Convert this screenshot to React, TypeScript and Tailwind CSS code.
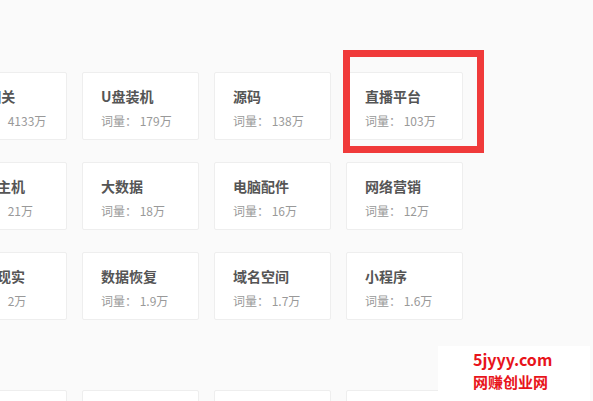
import React from "react";

const rows = [
  [
    ["5G相关", "4133万"],
    ["U盘装机", "179万"],
    ["源码", "138万"],
    ["直播平台", "103万"],
  ],
  [
    ["虚拟主机", "21万"],
    ["大数据", "18万"],
    ["电脑配件", "16万"],
    ["网络营销", "12万"],
  ],
  [
    ["虚拟现实", "2万"],
    ["数据恢复", "1.9万"],
    ["域名空间", "1.7万"],
    ["小程序", "1.6万"],
  ],
];

function Card({ title, count }: { title: string; count: string }) {
  return (
    <div className="h-[68px] bg-white border border-[#eeeeee] rounded-[2px] pl-[18px] pt-[14px] overflow-hidden">
      <div className="text-[14px] leading-[18px] font-bold text-[#555555] whitespace-nowrap">{title}</div>
      <div className="mt-[8px] text-[12px] leading-[16px] text-[#999999] whitespace-nowrap">
        词量：&nbsp;{count}
      </div>
    </div>
  );
}

export default function App() {
  return (
    <div
      className="relative w-[593px] h-[401px] overflow-hidden bg-[#fafafa]"
      style={{ fontFamily: '"Microsoft YaHei", "Noto Sans CJK SC", sans-serif' }}
    >
      <div className="pt-[72px] ml-[-50px]">
        <div className="grid grid-cols-[117px_117px_117px_117px] gap-x-[15px] gap-y-[22px]">
          {rows.flat().map(([t, c], i) => (
            <Card key={i} title={t} count={c} />
          ))}
        </div>
        <div className="mt-[70px] grid grid-cols-[117px_117px_117px_117px] gap-x-[15px]">
          {[0, 1, 2, 3].map((i) => (
            <div key={i} className="h-[68px] bg-white border border-[#eeeeee] rounded-[2px]" />
          ))}
        </div>
      </div>

      <div className="absolute left-[343px] top-[50px] w-[141px] h-[103px] border-[7px] border-[#f03a3a]" />

      <div className="absolute left-[438px] top-[346px] w-[152px] h-[60px] bg-white pl-[35px] pt-[3px]">
        <div className="text-[16px] leading-[20px] font-bold text-[#e8141b]">5jyyy.com</div>
        <div className="mt-[3px] text-[15px] leading-[19px] font-bold text-[#e8141b]">网赚创业网</div>
      </div>
    </div>
  );
}
